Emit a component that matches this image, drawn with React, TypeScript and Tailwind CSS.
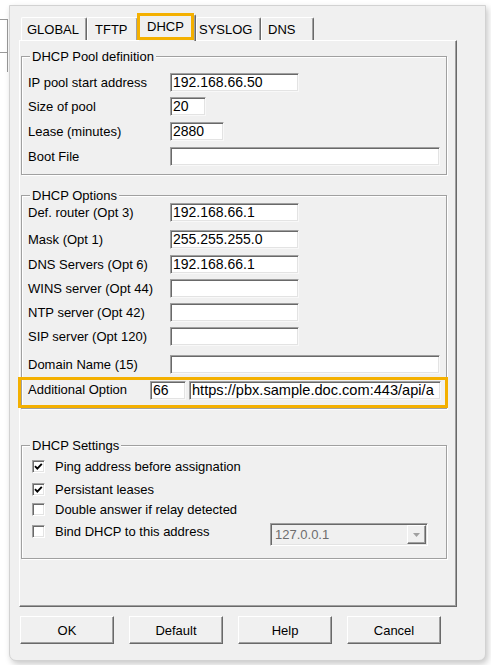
import clsx from "clsx";
import type { ReactNode } from "react";

interface TabDef {
  label: string;
  width: string;
  pad: string;
  active?: boolean;
}

const TABS: TabDef[] = [
  { label: "GLOBAL", width: "w-[66px]", pad: "pl-[5px]" },
  { label: "TFTP", width: "w-[51px]", pad: "pl-[7px]" },
  { label: "DHCP", width: "w-[58px]", pad: "pl-[8px]", active: true },
  { label: "SYSLOG", width: "w-[65px]", pad: "pl-[2px]" },
  { label: "DNS", width: "w-[53px]", pad: "pl-[6px]" },
];

function Field({ value = "", width }: { value?: string; width: string }) {
  return (
    <div
      className={clsx(
        "h-[19px] shrink-0 bg-white border border-t-[#a0a0a0] border-l-[#a0a0a0] border-r-[#f8f8f8] border-b-[#f8f8f8] shadow-[inset_1px_1px_0_#696969,inset_-1px_-1px_0_#e3e3e3] pl-[2px] text-[14px] leading-[17px] whitespace-nowrap overflow-hidden",
        width
      )}
    >
      {value}
    </div>
  );
}

function Row({ label, children, className }: { label: string; children: ReactNode; className?: string }) {
  return (
    <div className={clsx("flex items-center h-[19px]", className)}>
      <span className="w-[142px] shrink-0 text-[13px] leading-[15px]">{label}</span>
      {children}
    </div>
  );
}

function Group({ title, className, children }: { title: string; className?: string; children: ReactNode }) {
  return (
    <div className={clsx("ml-[1px] w-[426px] border border-[#a0a0a0] shadow-[inset_1px_1px_0_#fff,1px_1px_0_#fff]", className)}>
      <div className="-mt-[8px] ml-[8px] w-fit px-[2px] bg-[#f0f0f0] text-[13px] leading-[15px]">{title}</div>
      {children}
    </div>
  );
}

function Check({ checked, label, className, children }: { checked?: boolean; label: string; className?: string; children?: ReactNode }) {
  return (
    <div className={clsx("flex items-center h-[13px] pl-[10px]", className)}>
      <div className="w-[13px] h-[13px] shrink-0 bg-white border border-t-[#a0a0a0] border-l-[#a0a0a0] border-r-white border-b-white shadow-[inset_1px_1px_0_#696969,inset_-1px_-1px_0_#e3e3e3] flex items-center justify-center">
        {checked && (
          <svg width="11" height="11" viewBox="0 0 11 11">
            <polyline points="2,5.2 4.3,7.6 8.8,2.8" fill="none" stroke="#000" strokeWidth="1.9" />
          </svg>
        )}
      </div>
      <span className="ml-[10px] text-[13px] leading-[15px] whitespace-nowrap">{label}</span>
      {children}
    </div>
  );
}

function Btn({ label }: { label: string }) {
  return (
    <button className="w-[94px] h-[28px] flex items-center justify-center text-[13px] leading-[15px] bg-[#f0f0f0] border border-t-white border-l-white border-r-[#696969] border-b-[#696969] shadow-[inset_-1px_-1px_0_#a0a0a0]">
      {label}
    </button>
  );
}

export default function App() {
  return (
    <div className="w-[491px] h-[665px] bg-white overflow-hidden flex text-black font-['Liberation_Sans',Arial,sans-serif]">
      {/* window behind */}
      <div className="w-[9px] shrink-0">
        <div className="w-[8px] h-[53px] border-r border-[#9a9a9a]">
          <div className="mt-[19px] h-[34px] border-t border-b border-[#9a9a9a]" />
        </div>
      </div>

      {/* Settings dialog */}
      <div className="mt-[5px] w-[477px] h-[656px] bg-[#f0f0f0] border border-[#d2d2d2] rounded-b-[7px] shadow-[2px_3px_6px_rgba(0,0,0,0.22)] flex flex-col">
        {/* Tabs */}
        <div className="ml-[11px] mt-[8px] h-[26px] flex items-end">
          {TABS.map((tab) => (
            <div
              key={tab.label}
              className={clsx(
                "relative flex items-center text-[13px] leading-[15px] bg-[#f0f0f0] border-t border-l border-white border-r border-r-[#696969] rounded-t-[2px] shadow-[inset_-1px_0_0_#a0a0a0]",
                tab.width,
                tab.pad,
                tab.active ? "h-[27px] -mb-[1px] z-10 pb-[4px]" : "h-[23px]"
              )}
            >
              {tab.label}
              {tab.active && (
                <div className="absolute -left-[2px] -top-[2px] w-[57px] h-[27px] border-[3px] border-[#f4b000]" />
              )}
            </div>
          ))}
        </div>

        {/* Panel */}
        <div className="ml-[9px] w-[438px] h-[567px] shrink-0 border border-t-white border-l-white border-r-[#696969] border-b-[#696969] shadow-[inset_-1px_-1px_0_#a0a0a0] flex flex-col">
          <Group title="DHCP Pool definition" className="mt-[15px] h-[119px]">
            <div className="pl-[6px] flex flex-col">
              <Row label="IP pool start address" className="mt-[9px]">
                <Field value="192.168.66.50" width="w-[129px]" />
              </Row>
              <Row label="Size of pool" className="mt-[5px]">
                <Field value="20" width="w-[36px]" />
              </Row>
              <Row label="Lease (minutes)" className="mt-[6px]">
                <Field value="2880" width="w-[54px]" />
              </Row>
              <Row label="Boot File" className="mt-[6px]">
                <Field width="w-[270px]" />
              </Row>
            </div>
          </Group>

          <Group title="DHCP Options" className="mt-[20px] h-[214px]">
            <div className="pl-[6px] flex flex-col">
              <Row label="Def. router (Opt 3)">
                <Field value="192.168.66.1" width="w-[129px]" />
              </Row>
              <Row label="Mask (Opt 1)" className="mt-[8px]">
                <Field value="255.255.255.0" width="w-[129px]" />
              </Row>
              <Row label="DNS Servers (Opt 6)" className="mt-[6px]">
                <Field value="192.168.66.1" width="w-[129px]" />
              </Row>
              <Row label="WINS server (Opt 44)" className="mt-[5px]">
                <Field width="w-[129px]" />
              </Row>
              <Row label="NTP server (Opt 42)" className="mt-[5px]">
                <Field width="w-[129px]" />
              </Row>
              <Row label="SIP server (Opt 120)" className="mt-[5px]">
                <Field width="w-[129px]" />
              </Row>
              <Row label="Domain Name (15)" className="mt-[9px]">
                <Field width="w-[270px]" />
              </Row>
              <div className="relative mt-[7px] h-[19px] flex items-center">
                <span className="w-[122px] shrink-0 text-[13px] leading-[15px] -mt-[3px]">Additional Option</span>
                <Field value="66" width="w-[36px]" />
                <div className="w-[3px] shrink-0" />
                <div className="h-[19px] w-[252px] shrink-0 bg-white border border-t-[#a0a0a0] border-l-[#a0a0a0] border-r-[#f8f8f8] border-b-[#f8f8f8] shadow-[inset_1px_1px_0_#696969,inset_-1px_-1px_0_#e3e3e3] pl-[2px] text-[14.6px] leading-[17px] whitespace-nowrap overflow-hidden">
                  https://pbx.sample.doc.com:443/api/a
                </div>
                <div className="absolute -left-[10px] -top-[4px] -right-[2px] -bottom-[8px] border-[3px] border-[#f4b000]" />
              </div>
            </div>
          </Group>

          <Group title="DHCP Settings" className="mt-[36px] h-[114px]">
            <Check checked label="Ping address before assignation" className="mt-[7px]" />
            <Check checked label="Persistant leases" className="mt-[10px]" />
            <Check label="Double answer if relay detected" className="mt-[7px]" />
            <Check label="Bind DHCP to this address" className="mt-[9px]">
              <div className="ml-auto mr-[18px] self-start -mt-[2px] w-[158px] h-[23px] shrink-0 bg-[#f0f0f0] border border-t-[#a0a0a0] border-l-[#a0a0a0] border-r-white border-b-white shadow-[inset_1px_1px_0_#696969,inset_-1px_-1px_0_#e3e3e3] flex items-center">
                <span className="pl-[4px] flex-1 text-[13px] leading-[15px] text-[#6d6d6d]">127.0.0.1</span>
                <div className="w-[19px] h-[19px] mr-[1px] border border-t-white border-l-white border-r-[#696969] border-b-[#696969] shadow-[inset_-1px_-1px_0_#a0a0a0] flex items-center justify-center">
                  <svg width="7" height="4" viewBox="0 0 7 4">
                    <polygon points="0,0 7,0 3.5,4" fill="#a0a0a0" />
                  </svg>
                </div>
              </div>
            </Check>
          </Group>
        </div>

        {/* Buttons */}
        <div className="ml-[10px] mt-[9px] flex gap-[15px]">
          <Btn label="OK" />
          <Btn label="Default" />
          <Btn label="Help" />
          <Btn label="Cancel" />
        </div>
      </div>
    </div>
  );
}
